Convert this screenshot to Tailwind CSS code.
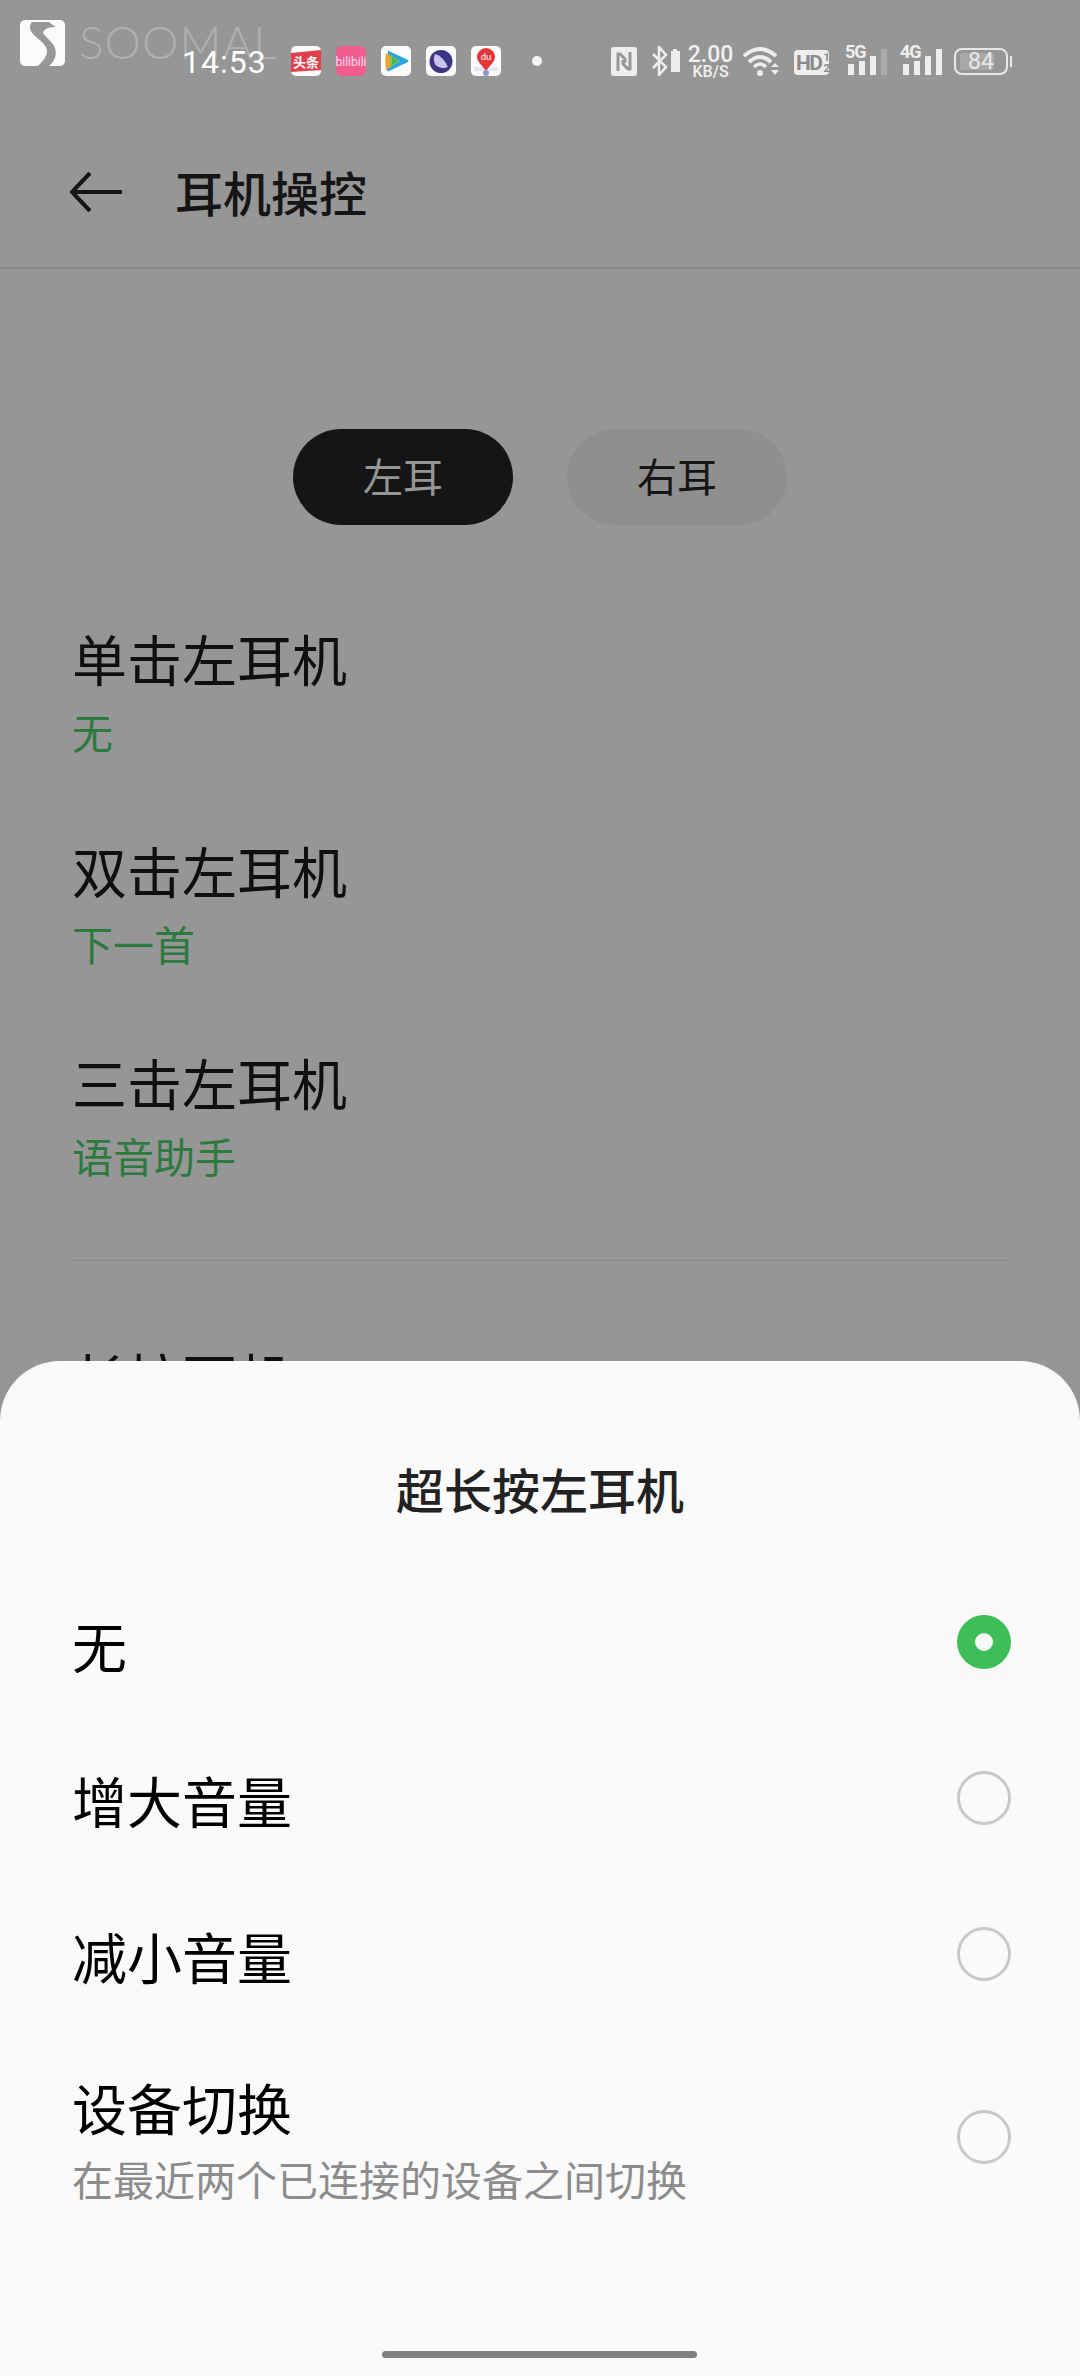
<!DOCTYPE html>
<html lang="zh-CN">
<head>
    <meta charset="UTF-8">
    <meta name="viewport" content="width=device-width, initial-scale=1.0">
    <title>耳机操控</title>
    <script src="https://cdn.jsdelivr.net/npm/@tailwindcss/browser@4"></script>
</head>
<body class="bg-[#969696] font-['Noto_Sans_CJK_SC','Noto_Sans',sans-serif]">
<div class="relative w-[1080px] h-[2376px] overflow-hidden bg-[#969696]">

    <!-- Watermark -->
    <div class="absolute left-[20px] top-[20px] flex items-start">
        <svg class="w-[45px] h-[46px]" viewBox="0 0 45 46">
            <rect width="45" height="46" rx="5" fill="#fbfbfb"/>
            <path d="M12 2 C8 6 10 12 16 17 C22 22 27 26 27 31 C27 37 22 42 18 46 L29 46 C35 41 37 34 35 28 C33 22 26 18 23 13 C24 9 28 7 36 7 C33 5 31 4 29 2 Z" fill="#989898"/>
        </svg>
        <span class="ml-[14px] -mt-[2px] text-[46px] leading-[48px] font-light tracking-[1px] text-[#b0b0b0] font-['Lato',sans-serif]">SOOMAL</span>
    </div>

    <!-- Status bar -->
    <div class="relative h-[96px] flex items-start pt-[46px] text-white">
        <span class="absolute left-[182px] top-[41px] text-[32px] leading-[42px] tracking-[1px] font-['Roboto',sans-serif]">14:53</span>

        <div class="ml-[291px] flex gap-[15px]">
            <svg class="w-[30px] h-[30px]" viewBox="0 0 30 30">
                <rect width="30" height="30" rx="5" fill="#fbfbfb"/>
                <path d="M0 7 L30 4 V24 L0 26 Z" fill="#e0404c"/>
                <text x="15" y="20.500" text-anchor="middle" font-size="13" font-weight="700" fill="#fff">头条</text>
            </svg>
            <svg class="w-[30px] h-[30px]" viewBox="0 0 30 30">
                <rect width="30" height="30" rx="6" fill="#f25d8e"/>
                <text x="15" y="20" text-anchor="middle" font-size="12" fill="#fde" font-family="Roboto">bilibili</text>
            </svg>
            <svg class="w-[30px] h-[30px]" viewBox="0 0 30 30">
                <rect width="30" height="30" rx="5" fill="#fbfbfb"/>
                <path d="M7 5 Q6 4 8 5 L27 14 Q28 15 27 16 L8 25 Q6 26 6 24 Z" fill="#2aa6e0"/>
                <path d="M5 7 L19 15 L5 24 Q4 15 5 7 Z" fill="#8cc63f"/>
                <path d="M5 7 L9 9.500 L9 21.500 L5 24 Q4 15 5 7 Z" fill="#f2a22c"/>
                <path d="M11 11.500 L17 15.200 L11 19 Z" fill="#3fb86a"/>
            </svg>
            <svg class="w-[30px] h-[30px]" viewBox="0 0 30 30">
                <rect width="30" height="30" rx="5" fill="#fbfbfb"/>
                <circle cx="15" cy="15.500" r="11.500" fill="#3c3484"/>
                <path d="M9 8 Q17 10 22 21 Q15 24 9.500 19 Q6.500 14 9 8 Z" fill="#c9c2ea"/>
            </svg>
            <svg class="w-[30px] h-[30px]" viewBox="0 0 30 30">
                <rect width="30" height="30" rx="5" fill="#fbfbfb"/>
                <rect x="3" y="21" width="24" height="4" fill="#e4e8ee"/>
                <path d="M15 25 C12 20 6 16 6 11 A9 9 0 0 1 24 11 C24 16 18 20 15 25 Z" fill="#e5343a"/>
                <text x="15" y="13.500" text-anchor="middle" font-size="9.500" fill="#fff" font-family="Roboto">du</text>
                <circle cx="15" cy="27" r="3" fill="#8a9bd0"/>
            </svg>
        </div>
        <span class="ml-[31px] mt-[10px] w-[10px] h-[10px] rounded-full bg-[#f4f4f4]"></span>

        <div class="absolute left-[611px] top-[46px] flex items-start text-[#f0f0f0]">
            <!-- NFC -->
            <svg class="w-[26px] h-[29px] mt-[1px]" viewBox="0 0 26 29">
                <rect width="26" height="29" rx="3" fill="#eeeeee"/>
                <path d="M7 24 V7 H9 L14 12 V16 M19 5 V22 H17 L12 17 V13" fill="none" stroke="#969696" stroke-width="3"/>
            </svg>
            <!-- Bluetooth + battery -->
            <svg class="ml-[14px] w-[30px] h-[30px]" viewBox="0 0 30 30">
                <path d="M2 8 L15 21 L8 29 V1 L15 9 L2 22" fill="none" stroke="#eeeeee" stroke-width="2.500"/>
                <path d="M20 5 H22 V3 H26 V5 H29 V26 H20 Z" fill="#eeeeee"/>
            </svg>
            <!-- Network speed -->
            <div class="ml-[7px] w-[45px] flex flex-col items-center font-['Roboto',sans-serif] font-medium">
                <span class="text-[23px] leading-[18px]">2.00</span>
                <span class="mt-[1px] text-[16px] leading-[14px]">KB/S</span>
            </div>
            <!-- Wifi -->
            <svg class="ml-[9px] w-[38px] h-[30px]" viewBox="0 0 38 30">
                <path d="M2 10 Q18 -4 34 10" fill="none" stroke="#eeeeee" stroke-width="4"/>
                <path d="M7 16 Q18 6 29 16" fill="none" stroke="#eeeeee" stroke-width="4"/>
                <path d="M12 21 Q18 15 24 21" fill="none" stroke="#eeeeee" stroke-width="3.500"/>
                <circle cx="18" cy="27" r="3" fill="#eeeeee"/>
                <path d="M33 17 L37 21 H29 Z M29 24 H37 L33 29 Z" fill="#eeeeee"/>
            </svg>
            <!-- HD -->
            <div class="ml-[14px] mt-[4px] w-[35px] h-[25px] rounded-[4px] bg-[#eeeeee] flex items-center text-[#8a8a8a] font-['Roboto',sans-serif] font-bold">
                <span class="ml-[2px] text-[21px] leading-[24px] tracking-[-1.500px]">HD</span>
                <span class="ml-[2px] flex flex-col text-[11px] leading-[11px]"><span>1</span><span>2</span></span>
            </div>
        </div>

        <!-- Signal 5G / 4G -->
        <div class="absolute left-[845px] top-[46px] flex">
            <div class="relative w-[40px] h-[29px]">
                <span class="absolute left-0 -top-[3px] text-[18px] leading-[18px] font-bold tracking-[-1px] text-[#eeeeee] font-['Roboto',sans-serif]">5G</span>
                <div class="absolute left-[3px] bottom-0 flex items-end gap-[5px]">
                    <span class="w-[6px] h-[11px] bg-[#eeeeee]"></span>
                    <span class="w-[6px] h-[14px] bg-[#eeeeee]"></span>
                    <span class="w-[6px] h-[19px] bg-[#eeeeee]"></span>
                    <span class="w-[6px] h-[26px] bg-[#aaaaaa]"></span>
                </div>
            </div>
            <div class="relative ml-[15px] w-[40px] h-[29px]">
                <span class="absolute left-0 -top-[3px] text-[18px] leading-[18px] font-bold tracking-[-1px] text-[#eeeeee] font-['Roboto',sans-serif]">4G</span>
                <div class="absolute left-[3px] bottom-0 flex items-end gap-[5px]">
                    <span class="w-[6px] h-[11px] bg-[#eeeeee]"></span>
                    <span class="w-[6px] h-[14px] bg-[#eeeeee]"></span>
                    <span class="w-[6px] h-[19px] bg-[#eeeeee]"></span>
                    <span class="w-[6px] h-[26px] bg-[#eeeeee]"></span>
                </div>
            </div>
            <!-- Battery -->
            <div class="ml-[14px] flex items-center">
                <div class="relative w-[54px] h-[27px] rounded-[8px] border-2 border-[#e8e8e8] mt-[2px] flex items-center justify-center">
                    <div class="absolute left-[4px] top-[3px] bottom-[3px] w-[34px] bg-[#a8a8a8] rounded-[2px]"></div>
                    <span class="relative text-[23px] leading-[23px] text-[#e8e8e8] font-['Roboto',sans-serif]">84</span>
                </div>
                <span class="ml-[2px] mt-[2px] w-[2px] h-[11px] bg-[#e8e8e8]"></span>
            </div>
        </div>
    </div>

    <!-- Header -->
    <div class="h-[173px] flex items-center border-b-2 border-[#888888] pt-[19px]">
        <svg class="ml-[69px] mt-[2px] w-[54px] h-[40px]" viewBox="0 0 54 40">
            <path d="M53 20 H3 M21 1 L3 20 L21 39" fill="none" stroke="#151515" stroke-width="4"/>
        </svg>
        <span class="ml-[52px] text-[48px] leading-[60px] font-medium text-[#151515]">耳机操控</span>
    </div>

    <!-- Left / right tabs -->
    <div class="mt-[160px] ml-[293px] flex gap-[54px]">
        <div class="w-[220px] h-[96px] rounded-[48px] bg-[#151515] flex items-center justify-center pb-[5px] text-[40px] text-[#969696]">左耳</div>
        <div class="w-[220px] h-[96px] rounded-[48px] bg-[#8f8f8f] flex items-center justify-center pb-[5px] text-[40px] text-[#151515]">右耳</div>
    </div>

    <!-- Settings behind the sheet -->
    <div class="mt-[97px] px-[72px]">
        <div class="flex flex-col gap-[78px]">
            <div>
                <div class="text-[55px] leading-[70px] text-[#0f0f0f]">单击左耳机</div>
                <div class="mt-[14px] text-[41px] leading-[50px] text-[#2c7a3e]">无</div>
            </div>
            <div>
                <div class="text-[55px] leading-[70px] text-[#0f0f0f]">双击左耳机</div>
                <div class="mt-[14px] text-[41px] leading-[50px] text-[#2c7a3e]">下一首</div>
            </div>
            <div>
                <div class="text-[55px] leading-[70px] text-[#0f0f0f]">三击左耳机</div>
                <div class="mt-[14px] text-[41px] leading-[50px] text-[#2c7a3e]">语音助手</div>
            </div>
        </div>
        <div class="mt-[80px] h-px bg-[#8a8a8a]"></div>
        <div class="mt-[80px] text-[55px] leading-[70px] text-[#0f0f0f]">长按耳机</div>
    </div>

    <!-- Bottom sheet -->
    <div class="absolute left-0 right-0 bottom-0 h-[1015px] rounded-t-[60px] bg-[#fafafa]">
        <div class="pt-[87px] text-center text-[48px] leading-[80px] font-medium text-[#222222]">超长按左耳机</div>
        <div class="mt-[36px] pl-[72px] pr-[69px]">
            <div class="h-[156px] flex items-center justify-between">
                <span class="pt-[3px] text-[55px] leading-[70px] text-black">无</span>
                <span class="w-[54px] h-[54px] rounded-full bg-[#3dbe57] flex items-center justify-center"><span class="w-[18px] h-[18px] rounded-full bg-[#fafafa]"></span></span>
            </div>
            <div class="h-[156px] flex items-center justify-between">
                <span class="pt-[1px] text-[55px] leading-[70px] text-black">增大音量</span>
                <span class="w-[54px] h-[54px] rounded-full border-[3px] border-[#c8c8c8]"></span>
            </div>
            <div class="h-[156px] flex items-center justify-between">
                <span class="pt-[1px] text-[55px] leading-[70px] text-black">减小音量</span>
                <span class="w-[54px] h-[54px] rounded-full border-[3px] border-[#c8c8c8]"></span>
            </div>
            <div class="h-[210px] flex items-center justify-between">
                <div>
                    <div class="text-[55px] leading-[70px] text-black">设备切换</div>
                    <div class="mt-[12px] text-[41px] leading-[50px] text-[#8c8c8c]">在最近两个已连接的设备之间切换</div>
                </div>
                <span class="w-[54px] h-[54px] rounded-full border-[3px] border-[#c8c8c8]"></span>
            </div>
        </div>
        <div class="absolute left-[382px] bottom-[18px] w-[315px] h-[7px] rounded-full bg-[#808080]"></div>
    </div>
</div>
</body>
</html>
